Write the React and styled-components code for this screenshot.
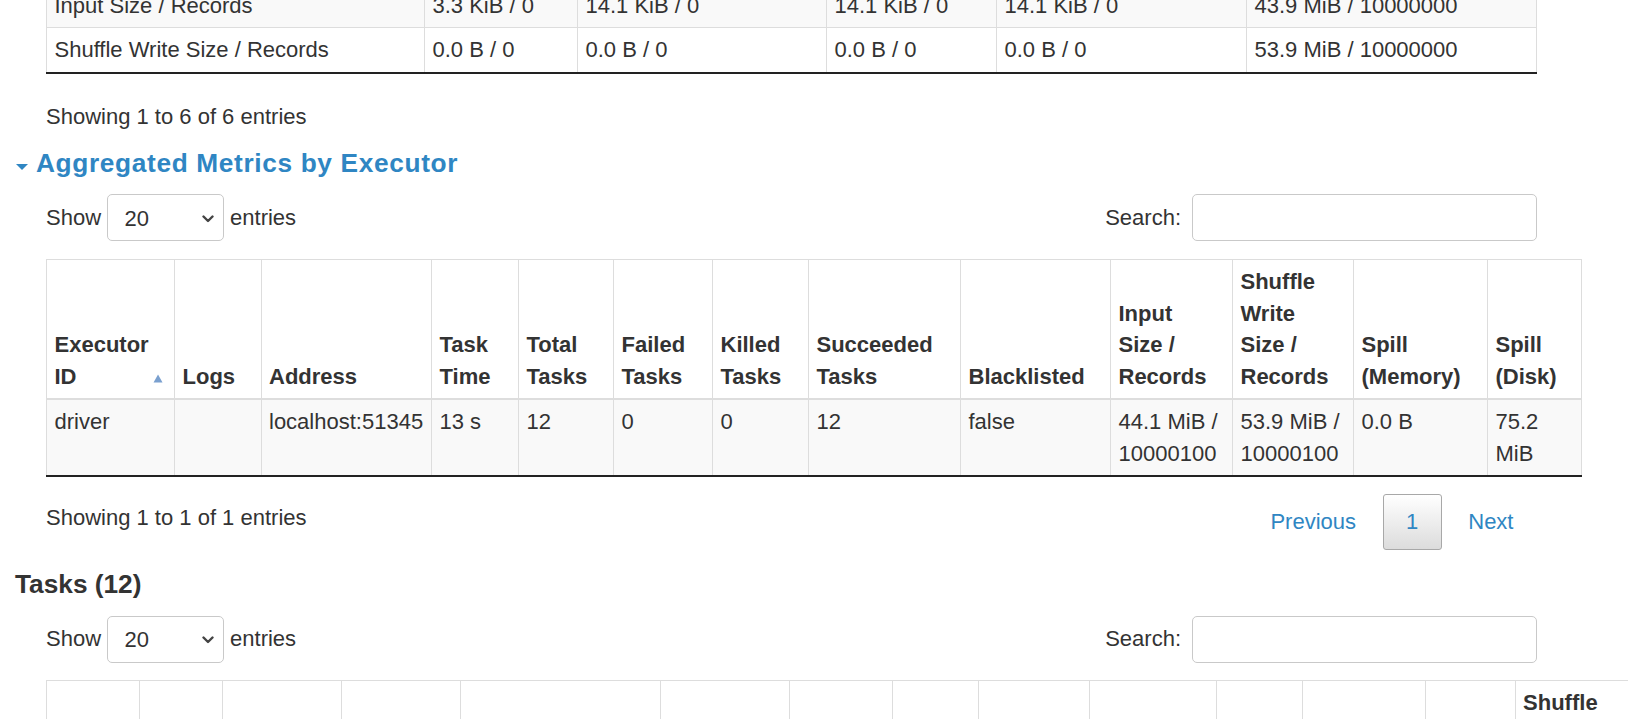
import React from "react";
import styled, { createGlobalStyle, css } from "styled-components";

const LINK = "#2f86c3";
const BORDER = "#dddddd";

const GlobalStyle = createGlobalStyle`
  html, body { margin: 0; padding: 0; overflow: hidden; background: #fff; }
  body {
    font-family: "Liberation Sans", Arial, Helvetica, sans-serif;
    font-size: 22px;
    line-height: 31.5px;
    color: #333;
  }
`;

const Page = styled.div`
  box-sizing: border-box;
  width: 1628px;
  margin-top: -17.5px;
  padding: 0 15px;
`;

const Block = styled.div`
  margin-left: 31px;
  width: 1491px;
`;

const Table = styled.table`
  border-collapse: collapse;
  table-layout: fixed;
  width: ${(p) => p.$w}px;
  margin-top: ${(p) => p.$mt || 0}px;
  ${(p) =>
    p.$footer &&
    css`
      border-bottom: 2px solid #222;
    `}
`;

const Col = styled.col`
  width: ${(p) => p.$w}px;
`;

const Row = styled.tr`
  background: ${(p) => (p.$odd ? "#f9f9f9" : "#fff")};
`;

const Td = styled.td`
  padding: 6px 7.5px;
  border: 1px solid ${BORDER};
  vertical-align: top;
  text-align: left;
  overflow-wrap: normal;
`;

const Th = styled.th`
  position: relative;
  padding: 6px 20px 6px 7.5px;
  border: 1px solid ${BORDER};
  border-bottom: 2px solid ${BORDER};
  vertical-align: bottom;
  text-align: left;
  font-weight: bold;
`;

const SortIcon = styled.svg`
  position: absolute;
  right: 11px;
  bottom: 15px;
  width: 10px;
  height: 9px;
`;

const Info = styled.div`
  padding-top: ${(p) => p.$pt}px;
`;

const H4 = styled.h4`
  margin: ${(p) => p.$mt}px 0 0 0;
  font-size: 26.25px;
  line-height: 31.5px;
  font-weight: bold;
  color: #333;
`;

const CollapseLink = styled.a`
  color: ${LINK};
  text-decoration: none;
  letter-spacing: 0.65px;
  cursor: pointer;
`;

const Arrow = styled.span`
  display: inline-block;
  width: 0;
  height: 0;
  border-left: 6px solid transparent;
  border-right: 6px solid transparent;
  border-top: 6px solid ${LINK};
  margin: 0 1px 2px 1px;
`;

const Toolbar = styled.div`
  display: flex;
  justify-content: space-between;
  align-items: center;
  height: 47px;
  margin-top: ${(p) => p.$mt}px;
`;

const LengthLabel = styled.label`
  display: flex;
  align-items: center;
  gap: 6px;
`;

const FakeSelect = styled.div`
  box-sizing: border-box;
  width: 117px;
  height: 47px;
  display: flex;
  align-items: center;
  justify-content: space-between;
  padding: 2px 9px 0 16.5px;
  border: 1px solid #c9c9c9;
  border-radius: 5px;
  background: #fff;
  color: #333;
`;

const SearchLabel = styled.label`
  display: flex;
  align-items: center;
  gap: 11px;
`;

const SearchInput = styled.input`
  box-sizing: border-box;
  width: 345px;
  height: 47px;
  border: 1px solid #c9c9c9;
  border-radius: 5px;
  padding: 0 8px;
  font: inherit;
  outline: none;
`;

const Footer = styled.div`
  display: flex;
  justify-content: space-between;
  align-items: flex-start;
`;

const Pagination = styled.div`
  display: flex;
  gap: 3px;
  padding-top: 17px;
`;

const PageBtn = styled.a`
  box-sizing: border-box;
  padding: 11px 22.5px;
  border: 1px solid transparent;
  border-radius: 3px;
  color: ${LINK};
  text-decoration: none;
  cursor: pointer;
  ${(p) =>
    p.$current &&
    css`
      border-color: #a8a8a8;
      background: linear-gradient(to bottom, #ffffff 0%, #dcdcdc 100%);
    `}
`;

const Chevron = () => (
  <svg width="12" height="8" viewBox="0 0 12 8">
    <path d="M1.5 1.5 L6 6 L10.5 1.5" fill="none" stroke="#444" strokeWidth="2.4" strokeLinecap="round" strokeLinejoin="round" />
  </svg>
);

const sum = (a) => a.reduce((s, x) => s + x, 0);

const summaryCols = [378, 153, 249, 170, 250, 290];
const summaryRows = [
  ["Input Size / Records", "3.3 KiB / 0", "14.1 KiB / 0", "14.1 KiB / 0", "14.1 KiB / 0", "43.9 MiB / 10000000"],
  ["Shuffle Write Size / Records", "0.0 B / 0", "0.0 B / 0", "0.0 B / 0", "0.0 B / 0", "53.9 MiB / 10000000"],
];

const execCols = [
  ["Executor ID", 128],
  ["Logs", 86.5],
  ["Address", 170.5],
  ["Task Time", 87],
  ["Total Tasks", 95],
  ["Failed Tasks", 99],
  ["Killed Tasks", 96],
  ["Succeeded Tasks", 152],
  ["Blacklisted", 150],
  ["Input Size / Records", 122],
  ["Shuffle Write Size / Records", 121],
  ["Spill (Memory)", 134],
  ["Spill (Disk)", 94],
];
const execRow = ["driver", "", "localhost:51345", "13 s", "12", "0", "0", "12", "false", "44.1 MiB / 10000100", "53.9 MiB / 10000100", "0.0 B", "75.2 MiB"];

const taskCols = [
  ["Index", 92.5],
  ["Task ID", 83],
  ["Attempt", 119],
  ["Status", 119.5],
  ["Locality Level", 200],
  ["Executor ID", 128.5],
  ["Host", 103.7],
  ["Logs", 86],
  ["Launch Time", 111.3],
  ["Duration", 127],
  ["GC Time", 86],
  ["Input Size / Records", 122.7],
  ["Write Time", 89.4],
  ["Shuffle Write Size / Records", 121],
  ["Errors", 120],
];

const ShowEntries = ({ mt }) => (
  <Toolbar $mt={mt}>
    <LengthLabel>
      Show
      <FakeSelect>
        <span>20</span>
        <Chevron />
      </FakeSelect>
      entries
    </LengthLabel>
    <SearchLabel>
      Search:
      <SearchInput type="search" />
    </SearchLabel>
  </Toolbar>
);

export default function App() {
  return (
    <>
      <GlobalStyle />
      <Page>
        <Block>
          <Table $w={sum(summaryCols)} $footer>
            <colgroup>
              {summaryCols.map((w, i) => (
                <Col key={i} $w={w} />
              ))}
            </colgroup>
            <tbody>
              {summaryRows.map((r, i) => (
                <Row key={i} $odd={i === 0}>
                  {r.map((c, j) => (
                    <Td key={j}>{c}</Td>
                  ))}
                </Row>
              ))}
            </tbody>
          </Table>
          <Info $pt={27}>Showing 1 to 6 of 6 entries</Info>
        </Block>

        <H4 $mt={16}>
          <CollapseLink>
            <Arrow /> Aggregated Metrics by Executor
          </CollapseLink>
        </H4>

        <Block>
          <ShowEntries mt={14.6} />
          <Table $w={sum(execCols.map((c) => c[1]))} $mt={18} $footer>
            <colgroup>
              {execCols.map(([, w], i) => (
                <Col key={i} $w={w} />
              ))}
            </colgroup>
            <thead>
              <tr>
                {execCols.map(([label], i) => (
                  <Th key={i}>
                    {label}
                    {i === 0 && (
                      <SortIcon viewBox="0 0 10 9">
                        <path d="M5 0.5 L9.5 8.5 L0.5 8.5 Z" fill="#7aa0cf" />
                      </SortIcon>
                    )}
                  </Th>
                ))}
              </tr>
            </thead>
            <tbody>
              <Row $odd>
                {execRow.map((c, j) => (
                  <Td key={j}>{c}</Td>
                ))}
              </Row>
            </tbody>
          </Table>
          <Footer>
            <Info $pt={25.4}>Showing 1 to 1 of 1 entries</Info>
            <Pagination>
              <PageBtn>Previous</PageBtn>
              <PageBtn $current>1</PageBtn>
              <PageBtn>Next</PageBtn>
            </Pagination>
          </Footer>
        </Block>

        <H4 $mt={19}>Tasks (12)</H4>

        <Block>
          <ShowEntries mt={15.5} />
          <Table $w={sum(taskCols.map((c) => c[1]))} $mt={17}>
            <colgroup>
              {taskCols.map(([, w], i) => (
                <Col key={i} $w={w} />
              ))}
            </colgroup>
            <thead>
              <tr>
                {taskCols.map(([label], i) => (
                  <Th key={i}>{label}</Th>
                ))}
              </tr>
            </thead>
          </Table>
        </Block>
      </Page>
    </>
  );
}
